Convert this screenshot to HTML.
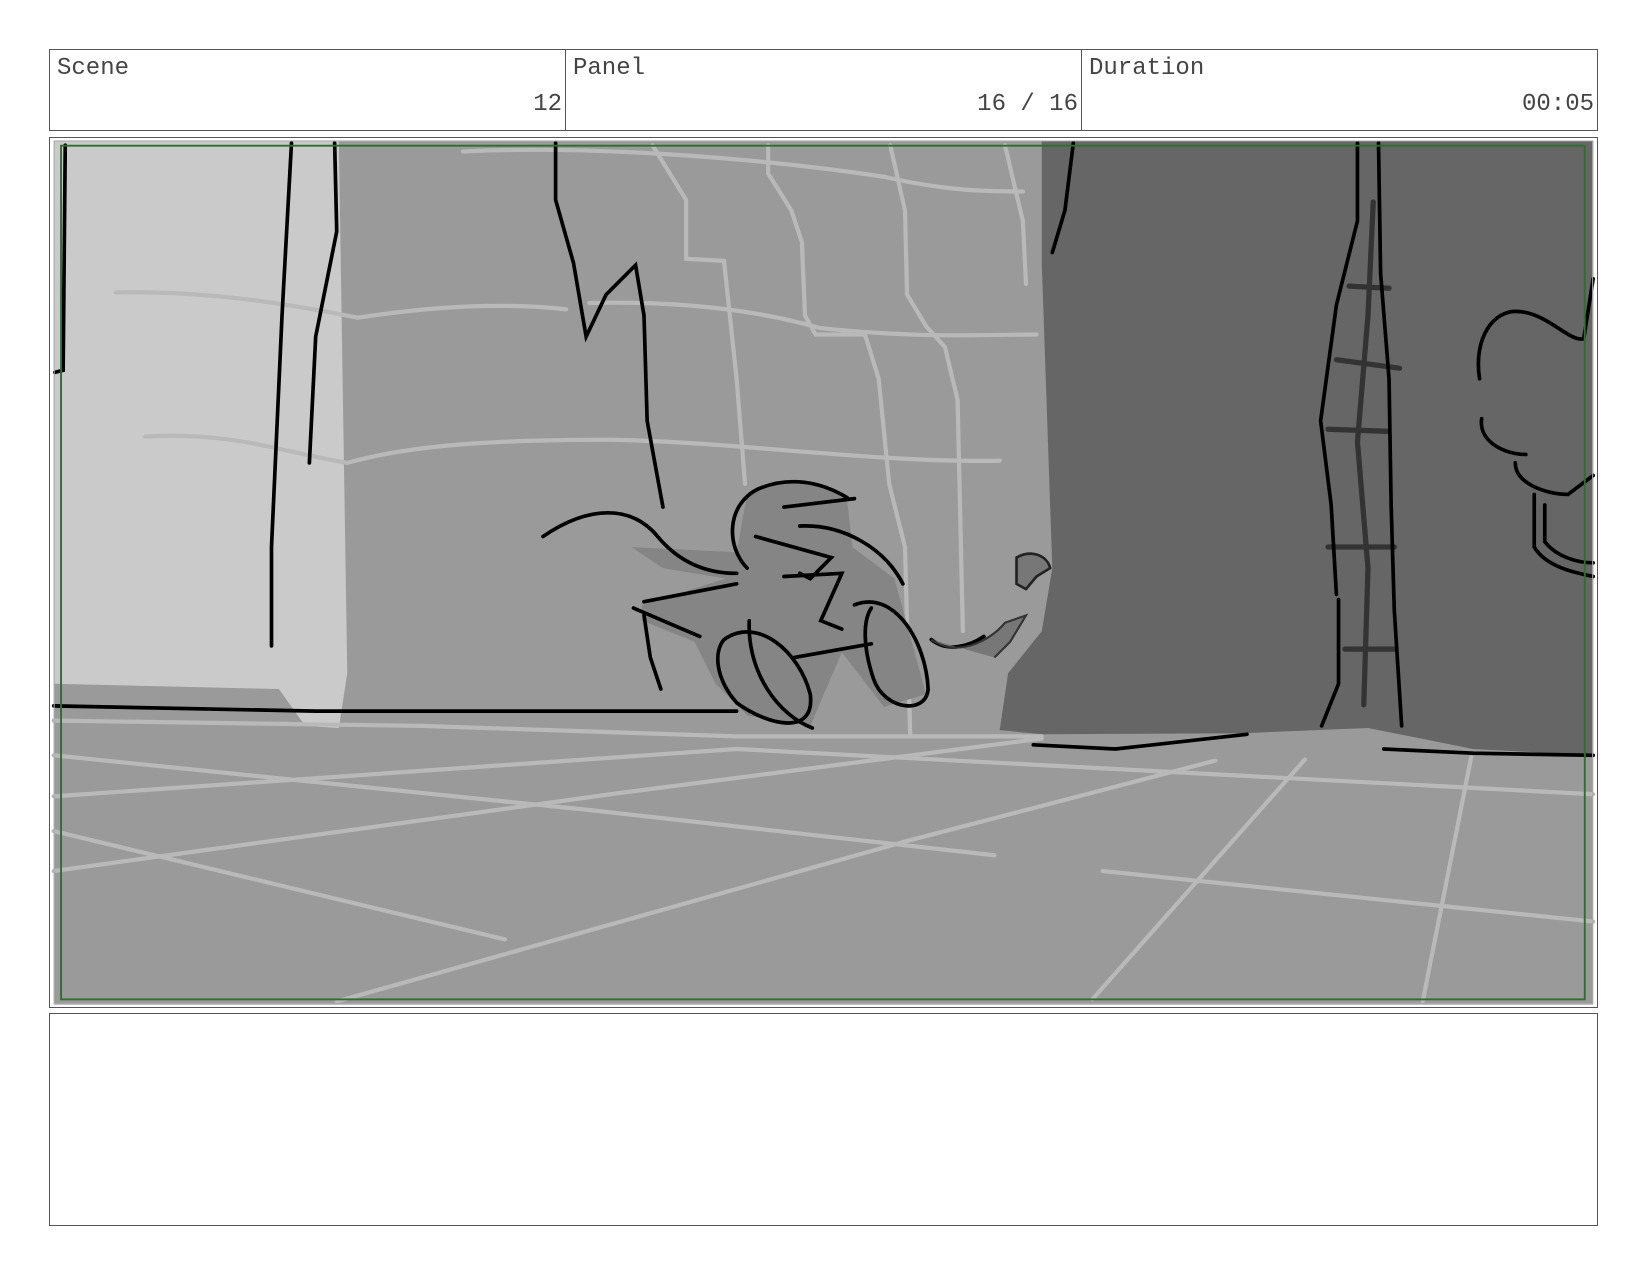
<!DOCTYPE html>
<html><head><meta charset="utf-8"><style>
html,body{margin:0;padding:0;background:#fff;width:1650px;height:1275px;overflow:hidden;position:relative}
.box{position:absolute;border:1px solid #555;box-sizing:border-box}
.t{position:absolute;font-family:"Liberation Mono",monospace;font-size:24px;color:#444}
svg{position:absolute;left:0;top:0}
</style></head><body>
<svg width="1650" height="1275" viewBox="0 0 1568 1212" preserveAspectRatio="none">
<rect x="51" y="134" width="1463" height="821" fill="#9a9a9a"/>
<path d="M51 134 L322 134 L330 640 L322 692 L290 690 L265 655 L51 650 Z" fill="#cacaca"/>
<path d="M990 134 L1514 134 L1514 718 L1400 712 L1300 692 L1180 697 L990 698 L950 694 L958 640 L990 600 L1000 540 L990 250 Z" fill="#666"/>
<g stroke="#b9b9b9" stroke-width="4" fill="none" stroke-linecap="round">
<path d="M110 278 C200 276 280 290 340 302 C420 290 480 288 538 294"/>
<path d="M138 415 C220 410 270 430 330 440 C400 420 500 418 580 418 C700 420 830 440 950 438"/>
<path d="M560 288 C650 286 720 295 780 312 C880 322 930 318 985 318"/>
<path d="M440 144 C560 138 720 150 840 168 C900 182 940 182 972 182"/>
<path d="M620 138 L652 190 L652 246 L688 248 L700 360 L708 460"/>
<path d="M730 138 L730 165 L752 200 L762 230 L765 300 L775 318 L822 318 L835 360 L845 460 L860 520 L865 700"/>
<path d="M846 138 L860 200 L862 280 L880 310 L898 330 L910 380 L915 600"/>
<path d="M955 138 L972 210 L975 270"/>
<path d="M51 685 L400 690 L700 700 L990 700"/>
<path d="M51 718 L560 770 L945 813"/>
<path d="M51 790 L480 893"/>
<path d="M51 828 L580 755 L990 702"/>
<path d="M51 757 L700 712"/>
<path d="M320 952 L860 800 L1155 723"/>
<path d="M700 712 L1514 755"/>
<path d="M1048 828 L1514 876"/>
<path d="M1038 950 L1240 722"/>
<path d="M1352 952 L1398 720"/>
</g>
<g fill="#858585">
<path d="M710 470 C740 450 790 455 805 475 L810 520 L850 550 L880 660 L840 672 L800 620 L770 690 L710 680 L680 650 L660 610 L610 590 L610 575 L690 550 L630 540 L600 520 L700 525 Z"/>
</g>
<g stroke="#333" stroke-width="5" fill="none" stroke-linecap="round">
<path d="M1305 192 L1300 300 L1290 420 L1300 540 L1296 670"/>
<path d="M1282 272 L1320 274 M1270 342 L1330 350 M1262 408 L1318 410 M1262 520 L1325 520 M1278 617 L1325 617"/>
</g>
<g stroke="#000" stroke-width="3.5" fill="none" stroke-linecap="round">
<path d="M62 138 L60 352 L52 354"/>
<path d="M277 136 L268 300 L258 520 L258 614"/>
<path d="M318 136 L320 220 L300 320 L294 440"/>
<path d="M528 136 L528 190 L545 250 L557 320 L576 280 L604 252 L612 300 L615 400 L630 482"/>
<path d="M51 671 L300 676 L700 676"/>
<path d="M1020 136 L1012 200 L1000 240"/>
<path d="M1290 136 L1290 210 L1270 290 L1255 400 L1265 480 L1270 565"/>
<path d="M1310 136 L1312 260 L1320 360 L1322 480 L1325 580 L1332 690"/>
<path d="M1272 570 L1272 650 L1256 690"/>
<path d="M1406 360 C1400 320 1420 296 1440 296 C1470 296 1490 325 1505 322 L1514 265"/>
<path d="M1408 398 C1405 420 1430 432 1450 432 M1440 440 C1440 460 1470 470 1490 470 L1514 452"/>
<path d="M1458 470 L1458 520 C1470 540 1500 545 1514 548 M1468 480 L1468 515 C1480 530 1500 535 1514 535"/>
<path d="M982 708 L1060 712 L1185 698"/>
<path d="M1315 712 L1400 716 L1514 718"/>
<path d="M516 510 C560 480 600 480 625 510 C650 540 680 545 700 545"/>
<path d="M710 540 C690 520 690 480 720 465 C750 452 780 458 805 473"/>
<path d="M745 482 L812 474 M718 510 L790 530 L770 550 L760 545 M760 500 C800 498 840 520 858 555 M745 548 L800 545 L780 590 L800 598"/>
<path d="M612 572 L700 555 M602 578 L665 605 M612 585 L618 625 L628 655"/>
<path d="M688 608 C720 585 760 620 770 660 C775 700 730 690 700 668 C680 645 678 620 688 608 Z"/>
<path d="M712 590 C710 640 740 680 772 692"/>
<path d="M755 625 L828 612 M812 575 C850 560 880 610 882 655 C880 680 840 675 830 645 C820 615 820 590 828 578"/>
<path d="M885 608 C900 620 920 615 935 605"/>
</g>
<path d="M885 608 C910 625 940 610 955 592 L975 585 L960 610 L945 625" fill="#777" stroke="#333" stroke-width="2"/>
<path d="M966 530 C980 522 995 528 998 540 L985 548 L975 560 L966 555 Z" fill="#777" stroke="#222" stroke-width="2.5"/>
<rect x="51.5" y="134" width="1462" height="820" fill="none" stroke="#aaa" stroke-width="1"/>
<rect x="58" y="138.5" width="1448" height="811.5" fill="none" stroke="#2e6e2e" stroke-width="1.8"/>
</svg>
<div class="box" style="left:49px;top:49px;width:1549px;height:82px"></div>
<div class="box" style="left:565px;top:49px;width:0;height:82px;border-width:0 0 0 1px"></div>
<div class="box" style="left:1081px;top:49px;width:0;height:82px;border-width:0 0 0 1px"></div>
<div class="t" style="left:57px;top:55px">Scene</div>
<div class="t" style="left:573px;top:55px">Panel</div>
<div class="t" style="left:1089px;top:55px">Duration</div>
<div class="t" style="right:1088px;top:91px">12</div>
<div class="t" style="right:572px;top:91px">16 / 16</div>
<div class="t" style="right:56px;top:91px">00:05</div>
<div class="box" style="left:49px;top:137px;width:1549px;height:871px;border-color:#555"></div>
<div class="box" style="left:49px;top:1013px;width:1549px;height:213px"></div>
</body></html>
